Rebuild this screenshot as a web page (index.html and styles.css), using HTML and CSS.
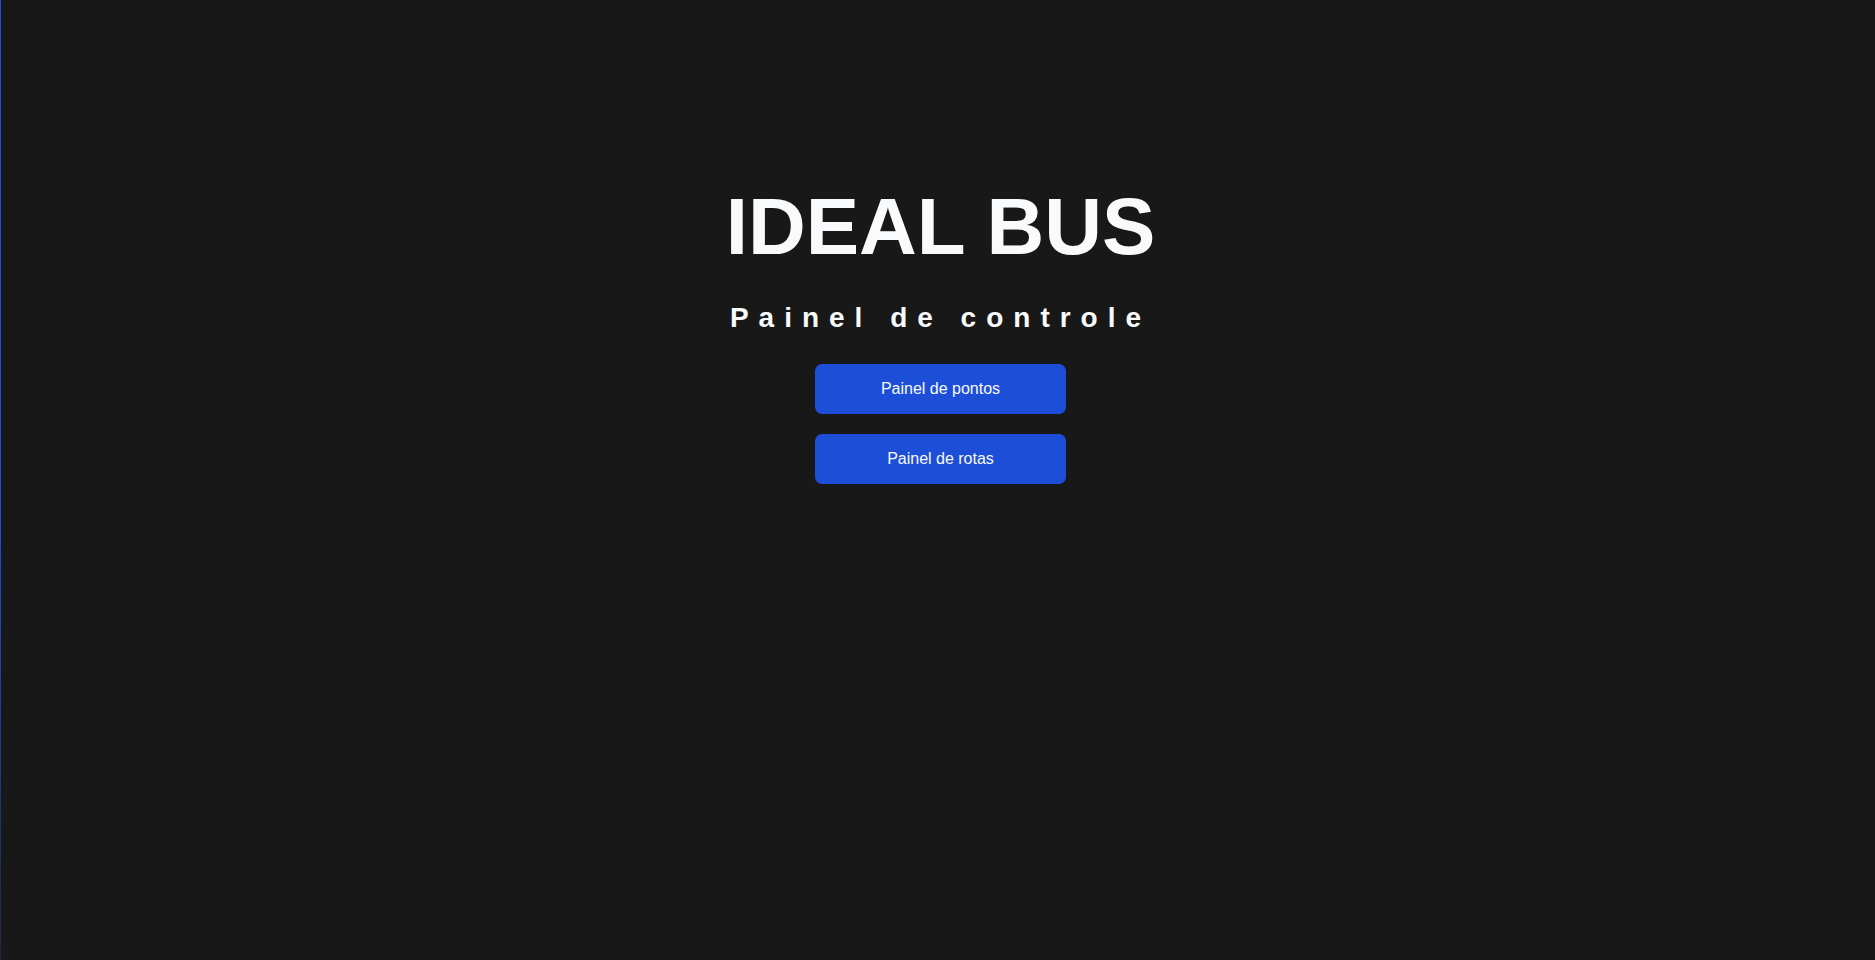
FILE: index.html
```html
<!DOCTYPE html>
<html lang="pt-BR">
<head>
<meta charset="utf-8">
<title>IDEAL BUS - Painel de controle</title>
<link rel="stylesheet" href="styles.css">
</head>
<body>
<main class="page">
  <h1 class="title">IDEAL BUS</h1>
  <h2 class="subtitle">Painel de controle</h2>
  <nav class="actions">
    <a class="btn" href="#">Painel de pontos</a>
    <a class="btn" href="#">Painel de rotas</a>
  </nav>
</main>
</body>
</html>
```

FILE: styles.css
```css
html, body {
  margin: 0;
  padding: 0;
  height: 100%;
}

body {
  background: #181818;
  color: #f8fafc;
  font-family: "Liberation Sans", Arial, sans-serif;
  border-left: 1px solid #1d4ed8;
  border-image: linear-gradient(to bottom, #1d4ed8 0%, #1d4ed8 55%, #20283c 100%) 1;
  box-sizing: border-box;
  overflow: hidden;
}

.page {
  display: flex;
  flex-direction: column;
  align-items: center;
  padding-top: 181px;
  padding-left: 5px;
}

.title {
  margin: 0;
  font-size: 80px;
  font-weight: 700;
  line-height: 92px;
  color: #f8fafc;
}

.subtitle {
  margin: 29px 0 0;
  font-size: 28px;
  font-weight: 700;
  line-height: 32px;
  letter-spacing: 10px;
  color: #f8fafc;
}

.actions {
  margin-top: 30px;
  display: flex;
  flex-direction: column;
  gap: 20px;
}

.btn {
  display: flex;
  align-items: center;
  justify-content: center;
  width: 251px;
  height: 50px;
  background: #1d4ed8;
  color: #f8fafc;
  border-radius: 7px;
  font-size: 16px;
  text-decoration: none;
}
```
